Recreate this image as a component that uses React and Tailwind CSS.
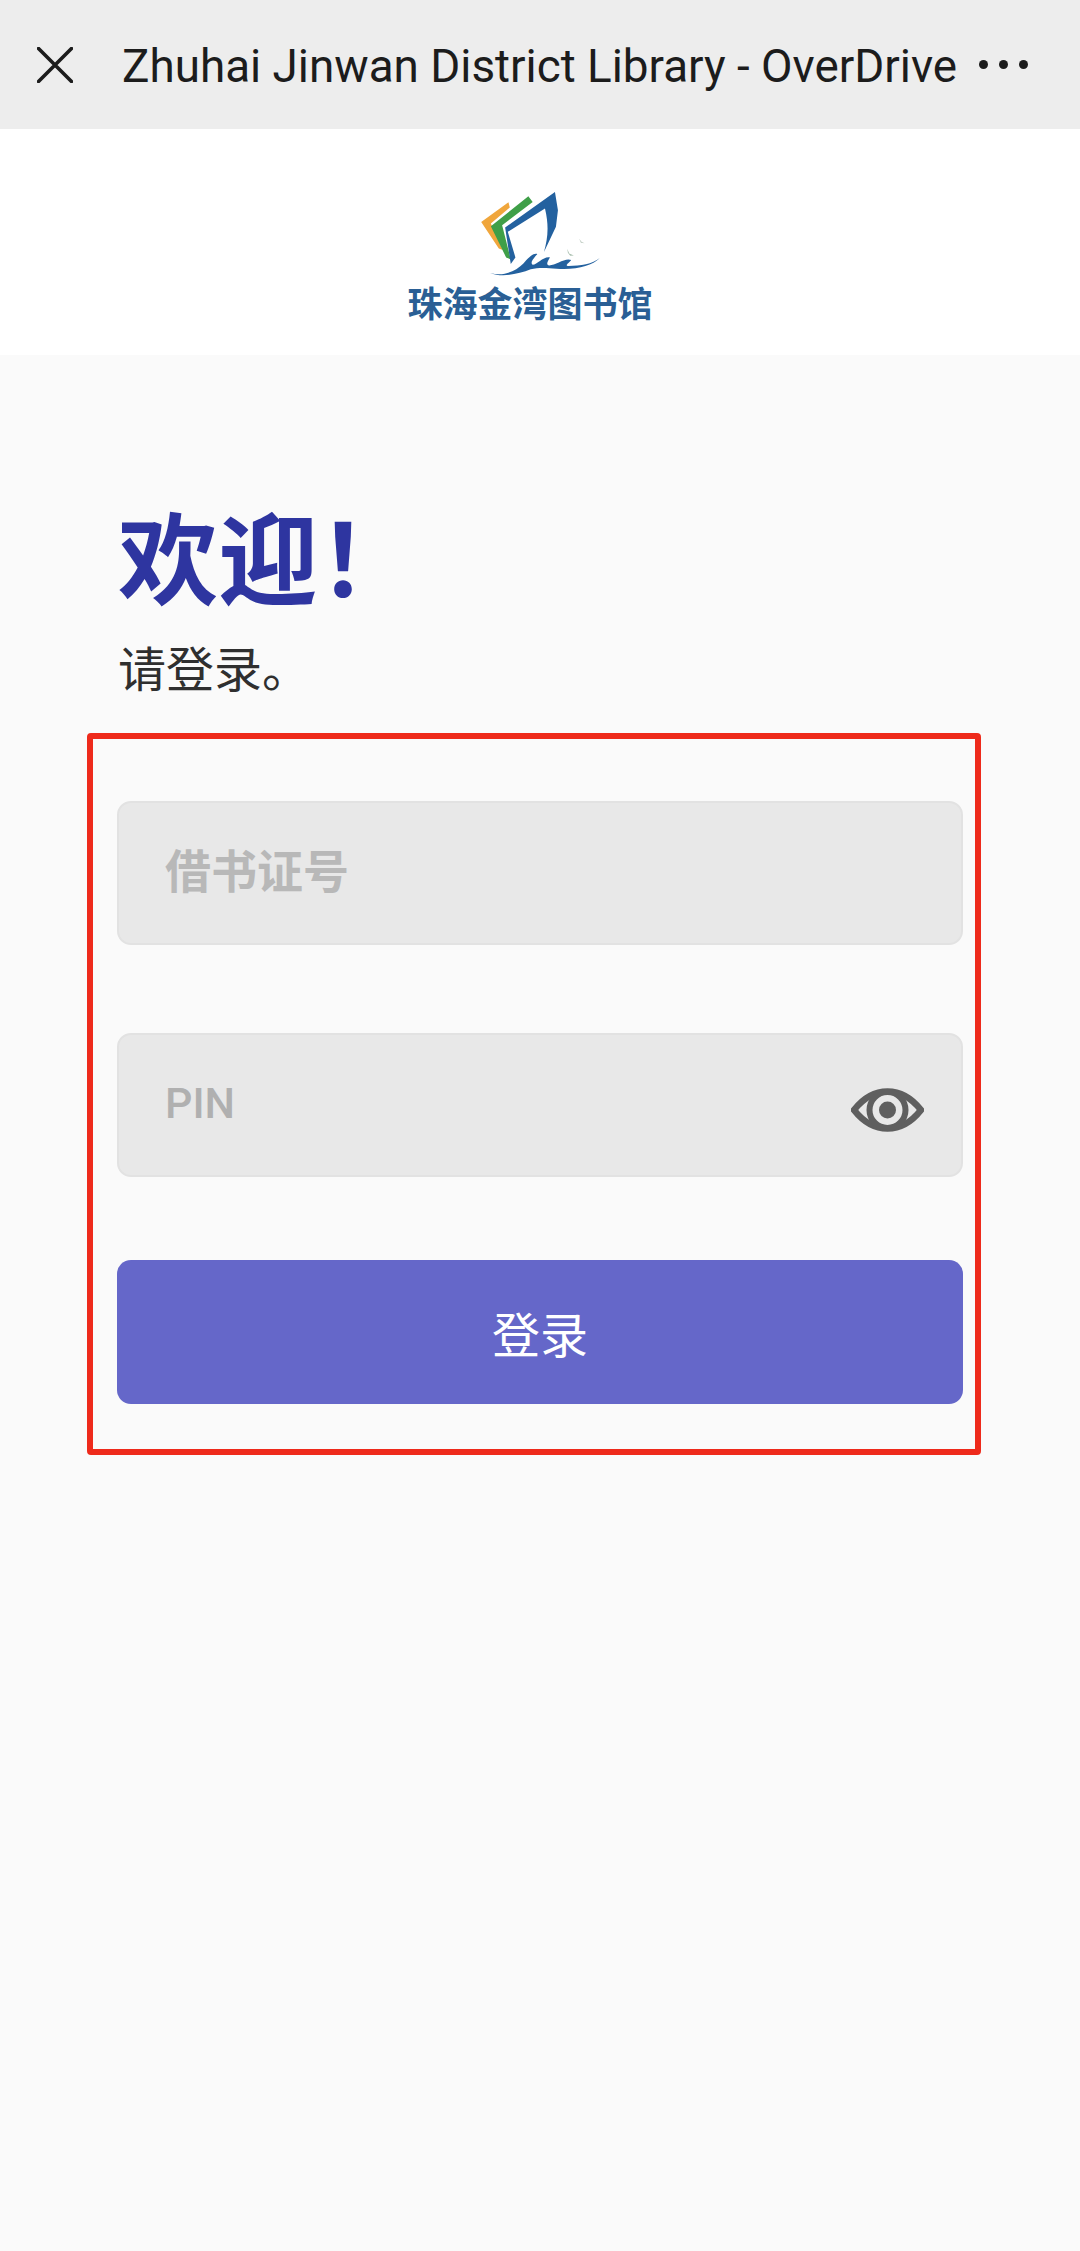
const cjk = { fontFamily: '"Noto Sans CJK SC", "Noto Sans", sans-serif' };

function LogoMark() {
  return (
    <svg viewBox="270 50 420 280" className="block w-[140px] h-[93px]">
      <path d="M385 96 L389 112 L332 160 L368 240 L356 235 L303 155 Z" fill="#f0a63c" />
      <path d="M445 78 L458 95 L366 165 L392 268 L378 262 L332 168 Z" fill="#3f9f48" />
      <path d="M525 65 L534 120 L528 170 L492 246 C503 205 508 170 495 115 L383 185 L406 262 L392 282 L375 172 Z" fill="#23619f" />
      <path d="M330 309 C372 320 405 304 430 280 C446 262 460 248 472 252 C464 262 448 278 458 284 C472 284 490 258 510 262 C504 272 496 284 508 286 C528 286 556 262 574 270 C568 278 552 288 566 288 C602 288 638 282 660 264 C636 288 590 300 530 296 C500 294 476 292 452 298 C416 312 366 324 330 309 Z" fill="#23619f" />
      <path d="M562 236 L568 250 L582 256 L571 257 L564 248 Z" fill="#a9bfae" />
      <path d="M598 206 L605 215 L614 219 L603 218 Z" fill="#bccabf" />
    </svg>
  );
}

function EyeIcon() {
  return (
    <svg viewBox="0 0 73 44" className="block w-[73px] h-[44px]">
      <path d="M3 22 C14 8 25 3.5 36.5 3.5 C48 3.5 59 8 70 22 C59 36 48 40.5 36.5 40.5 C25 40.5 14 36 3 22 Z" fill="none" stroke="#5f5f5f" strokeWidth="6.5" />
      <circle cx="36.5" cy="22" r="18" fill="none" stroke="#5f5f5f" strokeWidth="6" />
      <circle cx="36.5" cy="22" r="8.5" fill="#5f5f5f" />
    </svg>
  );
}

export default function App() {
  return (
    <div className="w-[1080px] h-[2251px] bg-[#fafafa] overflow-hidden" style={cjk}>
      <div className="h-[129px] bg-[#ededed] flex items-center">
        <svg viewBox="0 0 36 36" className="w-[36px] h-[36px] ml-[37px] shrink-0" fill="none" stroke="#1c1c1c" strokeWidth="3.6" strokeLinecap="round">
          <path d="M1.5 1.5 L34.5 34.5 M34.5 1.5 L1.5 34.5" />
        </svg>
        <div className="ml-[49px] w-[833px] whitespace-nowrap text-[45.8px] leading-[60px] pt-[5px] text-[#1c1c1c] font-['Roboto',sans-serif]">
          Zhuhai Jinwan District Library - OverDrive
        </div>
        <div className="ml-[24px] flex gap-[11px]">
          <div className="w-[9px] h-[9px] rounded-full bg-[#1c1c1c]" />
          <div className="w-[9px] h-[9px] rounded-full bg-[#1c1c1c]" />
          <div className="w-[9px] h-[9px] rounded-full bg-[#1c1c1c]" />
        </div>
      </div>

      <div className="h-[226px] bg-white flex flex-col items-center pt-[58px]">
        <LogoMark />
        <div className="mt-[2px] pr-[20px] text-[35px] leading-[40px] font-bold text-[#2a5f95] whitespace-nowrap">珠海金湾图书馆</div>
      </div>

      <div className="pl-[87px]">
        <h1 className="pt-[149px] pl-[31px] text-[100px] leading-[100px] font-bold text-[#2e35a0]">欢迎！</h1>
        <p className="mt-[32px] pl-[31px] text-[48px] leading-[60px] text-[#2f2f2f]">请登录。</p>
        <div className="mt-[37px] w-[894px] h-[722px] border-[6px] border-[#ee2a1b] rounded-[4px] pt-[62px] pl-[24px]">
          <div className="w-[846px] h-[144px] bg-[#e8e8e8] border-2 border-[#e2e2e2] rounded-[14px] flex items-center pl-[46px] pb-[10px] text-[46px] font-bold text-[#b8b8b8]">
            借书证号
          </div>
          <div className="mt-[88px] w-[846px] h-[144px] bg-[#e8e8e8] border-2 border-[#e2e2e2] rounded-[14px] flex items-center justify-between pl-[46px] pr-[37px] text-[#b0b0b0]">
            <span className="text-[43px] font-medium font-['Roboto',sans-serif] pb-[4px]">PIN</span>
            <span className="mt-[9px]"><EyeIcon /></span>
          </div>
          <div className="mt-[83px] w-[846px] h-[144px] bg-[#6567c9] rounded-[14px] flex items-center justify-center text-[48px] text-white">
            登录
          </div>
        </div>
      </div>
    </div>
  );
}
